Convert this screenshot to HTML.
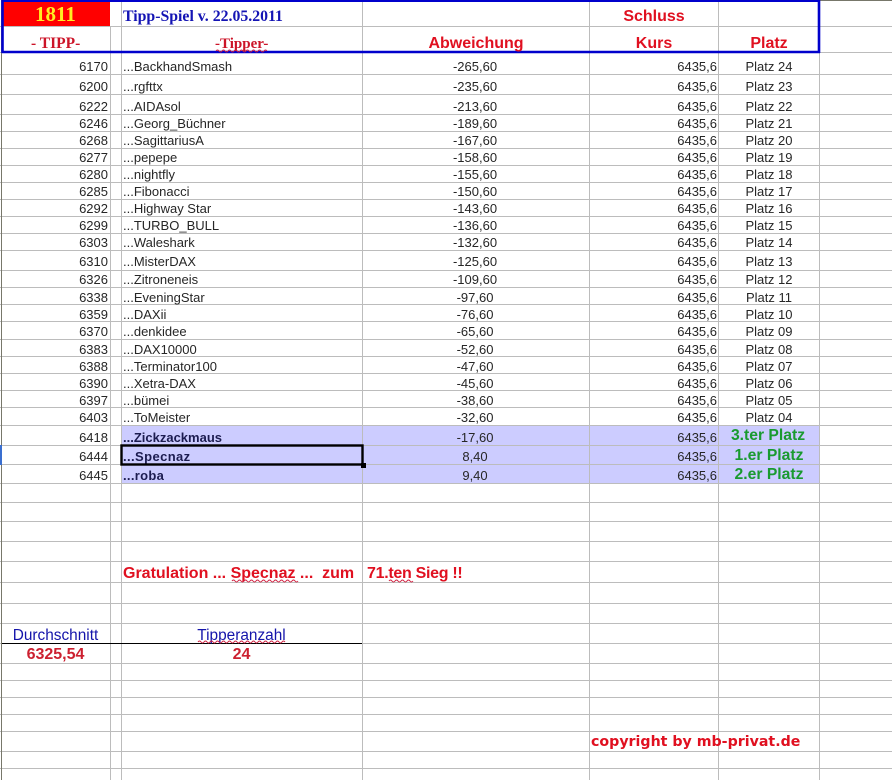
<!DOCTYPE html>
<html lang="de">
<head>
<meta charset="utf-8">
<title>Tipp-Spiel</title>
<style>
html,body{margin:0;padding:0;background:#fff;width:892px;height:780px;overflow:hidden}
svg{display:block;position:absolute;left:0;top:0}
text{font-family:"Liberation Sans",Arial,sans-serif;font-size:13px;fill:#262626;white-space:pre}
.r{text-anchor:end}
.m{text-anchor:middle}
.b{font-weight:bold;fill:#1c1c50}
.h{font-weight:bold;font-size:16px;fill:#e01020}
.g{font-weight:bold;font-size:15.7px;fill:#1a9a30;text-anchor:middle}
.ser{font-family:"Liberation Serif","Times New Roman",serif;font-weight:bold}
.big{font-weight:bold;font-size:16px;fill:#cc2030;text-anchor:middle}
.blu{font-size:15.4px;fill:#1414aa}
.cp{font-family:"DejaVu Sans",Verdana,sans-serif;font-weight:bold;font-size:14.2px;fill:#e01020}
</style>
</head>
<body>
<svg width="892" height="780" viewBox="0 0 892 780" xmlns="http://www.w3.org/2000/svg">
<rect x="122" y="426" width="697" height="57" fill="#ccccff"/>
<rect x="3" y="2" width="107" height="24" fill="#ff0000"/>
<path fill="none" stroke="#bcbcbc" stroke-width="1" d="M0 26.5H892M0 52.5H892M0 74.5H892M0 94.5H892M0 114.5H892M0 131.5H892M0 148.5H892M0 165.5H892M0 182.5H892M0 199.5H892M0 216.5H892M0 233.5H892M0 250.5H892M0 270.5H892M0 287.5H892M0 304.5H892M0 321.5H892M0 339.5H892M0 356.5H892M0 373.5H892M0 390.5H892M0 407.5H892M0 425.5H892M0 445.5H892M0 464.5H892M0 483.5H892M0 502.5H892M0 521.5H892M0 541.5H892M0 561.5H892M0 582.5H892M0 603.5H892M0 623.5H892M0 643.5H892M0 663.5H892M0 680.5H892M0 697.5H892M0 714.5H892M0 731.5H892M0 751.5H892M0 768.5H892"/>
<path fill="none" stroke="#bcbcbc" stroke-width="1" d="M110.5 26V780M121.5 2V780M362.5 2V780M589.5 2V780M718.5 2V780M819.5 52V780"/>
<path fill="none" stroke="#77776a" stroke-width="1" d="M1.5 0V780M820 0.5H892"/>
<rect x="0" y="445" width="2" height="20" fill="#3a6fd0"/>
<path fill="none" stroke="#0000cc" stroke-width="2" d="M2 1H819"/>
<path fill="none" stroke="#0000cc" stroke-width="2.6" d="M2.5 0V53M819 0V53M2 52H820"/>
<path fill="none" stroke="#000" stroke-width="1" d="M2 643.5H362"/>

<text class="ser" x="35" y="21" style="font-size:21px;fill:#ffee22">1811</text>
<text class="ser" x="123" y="21" style="font-size:15.8px;fill:#1414b4">Tipp-Spiel v. 22.05.2011</text>
<text class="ser" x="31" y="48" style="font-size:15.5px;fill:#cc1428">- TIPP-</text>
<text class="ser" x="215" y="48" style="font-size:15px;fill:#cc1428">-Tipper-</text>
<text class="h m" x="654" y="21">Schluss</text>
<text class="h m" x="476" y="48">Abweichung</text>
<text class="h m" x="654" y="48">Kurs</text>
<text class="h m" x="769" y="48">Platz</text>
<path fill="none" stroke="#d02040" stroke-width="1" d="M216 51q1.5-2 3 0t3 0 3 0 3 0 3 0 3 0 3 0 3 0 3 0 3 0 3 0 3 0 3 0 3 0 3 0 3 0 3 0"/>

<text class="r" x="108" y="71">6170</text><text x="123" y="71">...BackhandSmash</text><text class="m" x="475" y="71">-265,60</text><text class="r" x="717" y="71">6435,6</text><text class="m" x="769" y="71">Platz 24</text>
<text class="r" x="108" y="91">6200</text><text x="123" y="91">...rgfttx</text><text class="m" x="475" y="91">-235,60</text><text class="r" x="717" y="91">6435,6</text><text class="m" x="769" y="91">Platz 23</text>
<text class="r" x="108" y="111">6222</text><text x="123" y="111">...AIDAsol</text><text class="m" x="475" y="111">-213,60</text><text class="r" x="717" y="111">6435,6</text><text class="m" x="769" y="111">Platz 22</text>
<text class="r" x="108" y="128">6246</text><text x="123" y="128">...Georg_Büchner</text><text class="m" x="475" y="128">-189,60</text><text class="r" x="717" y="128">6435,6</text><text class="m" x="769" y="128">Platz 21</text>
<text class="r" x="108" y="145">6268</text><text x="123" y="145">...SagittariusA</text><text class="m" x="475" y="145">-167,60</text><text class="r" x="717" y="145">6435,6</text><text class="m" x="769" y="145">Platz 20</text>
<text class="r" x="108" y="162">6277</text><text x="123" y="162">...pepepe</text><text class="m" x="475" y="162">-158,60</text><text class="r" x="717" y="162">6435,6</text><text class="m" x="769" y="162">Platz 19</text>
<text class="r" x="108" y="179">6280</text><text x="123" y="179">...nightfly</text><text class="m" x="475" y="179">-155,60</text><text class="r" x="717" y="179">6435,6</text><text class="m" x="769" y="179">Platz 18</text>
<text class="r" x="108" y="196">6285</text><text x="123" y="196">...Fibonacci</text><text class="m" x="475" y="196">-150,60</text><text class="r" x="717" y="196">6435,6</text><text class="m" x="769" y="196">Platz 17</text>
<text class="r" x="108" y="213">6292</text><text x="123" y="213">...Highway Star</text><text class="m" x="475" y="213">-143,60</text><text class="r" x="717" y="213">6435,6</text><text class="m" x="769" y="213">Platz 16</text>
<text class="r" x="108" y="230">6299</text><text x="123" y="230">...TURBO_BULL</text><text class="m" x="475" y="230">-136,60</text><text class="r" x="717" y="230">6435,6</text><text class="m" x="769" y="230">Platz 15</text>
<text class="r" x="108" y="247">6303</text><text x="123" y="247">...Waleshark</text><text class="m" x="475" y="247">-132,60</text><text class="r" x="717" y="247">6435,6</text><text class="m" x="769" y="247">Platz 14</text>
<text class="r" x="108" y="266">6310</text><text x="123" y="266">...MisterDAX</text><text class="m" x="475" y="266">-125,60</text><text class="r" x="717" y="266">6435,6</text><text class="m" x="769" y="266">Platz 13</text>
<text class="r" x="108" y="284">6326</text><text x="123" y="284">...Zitroneneis</text><text class="m" x="475" y="284">-109,60</text><text class="r" x="717" y="284">6435,6</text><text class="m" x="769" y="284">Platz 12</text>
<text class="r" x="108" y="302">6338</text><text x="123" y="302">...EveningStar</text><text class="m" x="475" y="302">-97,60</text><text class="r" x="717" y="302">6435,6</text><text class="m" x="769" y="302">Platz 11</text>
<text class="r" x="108" y="319">6359</text><text x="123" y="319">...DAXii</text><text class="m" x="475" y="319">-76,60</text><text class="r" x="717" y="319">6435,6</text><text class="m" x="769" y="319">Platz 10</text>
<text class="r" x="108" y="336">6370</text><text x="123" y="336">...denkidee</text><text class="m" x="475" y="336">-65,60</text><text class="r" x="717" y="336">6435,6</text><text class="m" x="769" y="336">Platz 09</text>
<text class="r" x="108" y="354">6383</text><text x="123" y="354">...DAX10000</text><text class="m" x="475" y="354">-52,60</text><text class="r" x="717" y="354">6435,6</text><text class="m" x="769" y="354">Platz 08</text>
<text class="r" x="108" y="371">6388</text><text x="123" y="371">...Terminator100</text><text class="m" x="475" y="371">-47,60</text><text class="r" x="717" y="371">6435,6</text><text class="m" x="769" y="371">Platz 07</text>
<text class="r" x="108" y="388">6390</text><text x="123" y="388">...Xetra-DAX</text><text class="m" x="475" y="388">-45,60</text><text class="r" x="717" y="388">6435,6</text><text class="m" x="769" y="388">Platz 06</text>
<text class="r" x="108" y="405">6397</text><text x="123" y="405">...bümei</text><text class="m" x="475" y="405">-38,60</text><text class="r" x="717" y="405">6435,6</text><text class="m" x="769" y="405">Platz 05</text>
<text class="r" x="108" y="422">6403</text><text x="123" y="422">...ToMeister</text><text class="m" x="475" y="422">-32,60</text><text class="r" x="717" y="422">6435,6</text><text class="m" x="769" y="422">Platz 04</text>

<text class="r" x="108" y="442">6418</text><text class="b" x="123" y="442">...Zickzackmaus</text><text class="m" x="475" y="442">-17,60</text><text class="r" x="717" y="442">6435,6</text><text class="g" x="768" y="440">3.ter Platz</text>
<text class="r" x="108" y="461">6444</text><text class="b" x="123" y="461" style="letter-spacing:.4px">...Specnaz</text><text class="m" x="475" y="461">8,40</text><text class="r" x="717" y="461">6435,6</text><text class="g" x="769" y="460">1.er Platz</text>
<text class="r" x="108" y="480">6445</text><text class="b" x="123" y="480" style="letter-spacing:.3px">...roba</text><text class="m" x="475" y="480">9,40</text><text class="r" x="717" y="480">6435,6</text><text class="g" x="769" y="479">2.er Platz</text>

<rect x="121.5" y="445.5" width="241" height="19" fill="none" stroke="#000" stroke-width="2.4"/>
<rect x="361" y="463" width="5" height="5" fill="#000"/>

<text class="h" x="123" y="578">Gratulation ... Specnaz ...  zum</text>
<text class="h" x="367" y="578" style="letter-spacing:-.3px">71.ten Sieg !!</text>
<path fill="none" stroke="#d02040" stroke-width="1" d="M232 581q1.5-2 3 0t3 0 3 0 3 0 3 0 3 0 3 0 3 0 3 0 3 0 3 0 3 0 3 0 3 0 3 0 3 0 3 0 3 0 3 0 3 0 3 0 3 0M389 581q1.5-2 3 0t3 0 3 0 3 0 3 0 3 0 3 0 3 0"/>

<text class="blu m" x="55.500" y="640">Durchschnitt</text>
<text class="blu m" x="241.500" y="640">Tipperanzahl</text>
<path fill="none" stroke="#d02040" stroke-width="1" d="M198 642q1.500-2 3 0t3 0 3 0 3 0 3 0 3 0 3 0 3 0 3 0 3 0 3 0 3 0 3 0 3 0 3 0 3 0 3 0 3 0 3 0 3 0 3 0 3 0 3 0 3 0 3 0 3 0 3 0 3 0 3 0"/>
<text class="big" x="55.500" y="659">6325,54</text>
<text class="big" x="241.500" y="659">24</text>

<text class="cp" x="591" y="746">copyright by mb-privat.de</text>
</svg>
</body>
</html>
